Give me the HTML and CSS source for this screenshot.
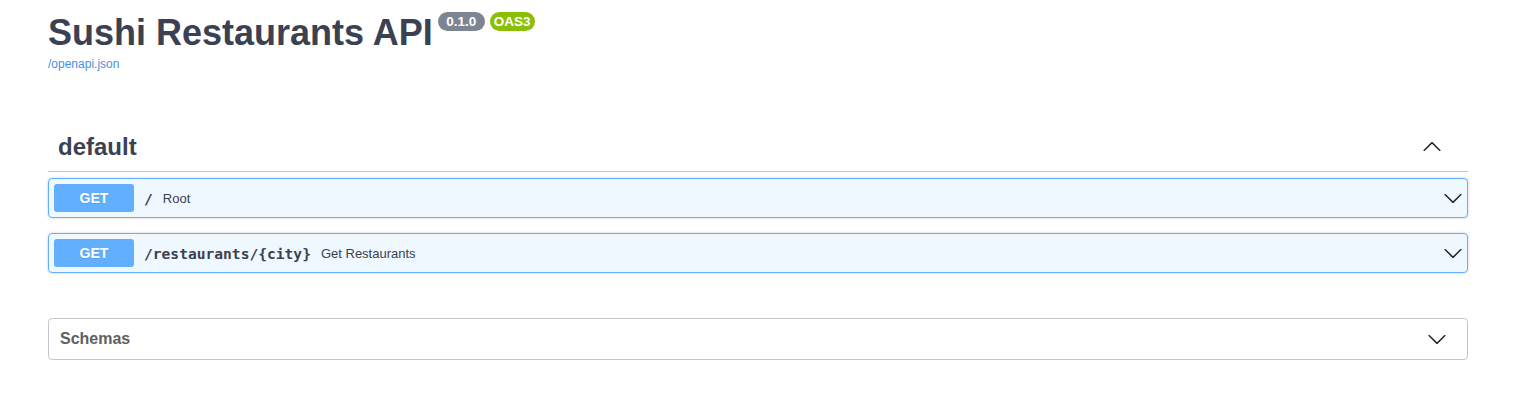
FILE: index.html
```html
<!DOCTYPE html>
<html>
<head>
<meta charset="utf-8">
<title>Sushi Restaurants API</title>
<link rel="stylesheet" href="styles.css">
</head>
<body>
<div class="wrapper">
  <div class="info">
    <h2 class="title">Sushi Restaurants API<span class="badge badge-version">0.1.0</span><span class="badge badge-oas">OAS3</span></h2>
    <a class="spec-link" href="#">/openapi.json</a>
  </div>

  <section class="tag-section">
    <h3 class="tag">
      <span class="tag-name">default</span>
      <span class="tag-toggle">
        <svg width="20" height="20" viewBox="0 0 20 20"><path d="M17.418 14.891c.272.268.709.268.979 0s.271-.701 0-.969l-7.908-7.83c-.27-.268-.707-.268-.979 0l-7.908 7.830c-.27.268-.27.701 0 .969.271.268.709.268.979 0L10 7.75l7.418 7.141z" fill="#222"/></svg>
      </span>
    </h3>

    <div class="opblock">
      <div class="summary">
        <span class="method">GET</span>
        <span class="path">/</span>
        <span class="desc">Root</span>
        <svg class="arrow" width="20" height="20" viewBox="0 0 20 20"><path d="M17.418 6.109c.272-.268.709-.268.979 0s.271.701 0 .969l-7.908 7.83c-.27.268-.707.268-.979 0l-7.908-7.830c-.27-.268-.27-.701 0-.969.271-.268.709-.268.979 0L10 13.25l7.418-7.141z" fill="#222"/></svg>
      </div>
    </div>

    <div class="opblock">
      <div class="summary">
        <span class="method">GET</span>
        <span class="path">/restaurants/{city}</span>
        <span class="desc">Get Restaurants</span>
        <svg class="arrow" width="20" height="20" viewBox="0 0 20 20"><path d="M17.418 6.109c.272-.268.709-.268.979 0s.271.701 0 .969l-7.908 7.83c-.27.268-.707.268-.979 0l-7.908-7.830c-.27-.268-.27-.701 0-.969.271-.268.709-.268.979 0L10 13.25l7.418-7.141z" fill="#222"/></svg>
      </div>
    </div>
  </section>

  <section class="models">
    <h4 class="models-title">
      <span>Schemas</span>
      <svg width="20" height="20" viewBox="0 0 20 20"><path d="M17.418 6.109c.272-.268.709-.268.979 0s.271.701 0 .969l-7.908 7.83c-.27.268-.707.268-.979 0l-7.908-7.830c-.27-.268-.27-.701 0-.969.271-.268.709-.268.979 0L10 13.25l7.418-7.141z" fill="#222"/></svg>
    </h4>
  </section>
</div>
</body>
</html>
```

FILE: styles.css
```css
html, body {
  margin: 0;
  padding: 0;
  background: #fff;
}

body {
  font-family: "Liberation Sans", Arial, sans-serif;
  color: #3b4151;
}

.wrapper {
  margin-left: 48px;
  width: 1420px;
}

.info {
  padding-top: 13px;
  display: flex;
  flex-direction: column;
  align-items: flex-start;
}

.title {
  margin: 0;
  font-size: 36px;
  line-height: 40px;
  font-weight: 700;
  color: #3b4151;
  display: flex;
  align-items: flex-start;
}

.badge {
  display: inline-block;
  margin-top: -1px;
  margin-left: 5px;
  height: 19px;
  line-height: 19px;
  font-size: 13.5px;
  font-weight: 700;
  color: #fff;
  border-radius: 57px;
  box-sizing: border-box;
}

.badge-version {
  margin-left: 5px;
  background: #7d8492;
  padding: 0 8.5px;
}

.badge-oas {
  background: #89bf04;
  padding: 0 4px;
}

.spec-link {
  margin-top: 4px;
  font-size: 12px;
  line-height: 14px;
  color: #4990e2;
  text-decoration: none;
}

.tag-section {
  margin-top: 52px;
}

.tag {
  margin: 0;
  display: flex;
  align-items: center;
  justify-content: space-between;
  padding: 10px 20px 10px 10px;
  font-size: 24px;
  line-height: 28px;
  font-weight: 700;
  color: #3b4151;
  border-bottom: 1px solid rgba(59, 65, 81, 0.3);
}

.tag-toggle {
  display: flex;
  margin-right: 6px;
  margin-top: -3px;
}

.opblock {
  margin: 6px 0 15px;
  border: 1px solid #61affe;
  background: rgba(97, 175, 254, 0.1);
  border-radius: 4px;
  box-shadow: 0 0 3px rgba(0, 0, 0, 0.19);
}

.opblock + .opblock {
  margin-top: 0;
}

.summary {
  display: flex;
  align-items: center;
  padding: 5px;
}

.method {
  min-width: 80px;
  padding: 6px 0;
  line-height: 16px;
  font-size: 14px;
  font-weight: 700;
  text-align: center;
  color: #fff;
  background: #61affe;
  border-radius: 3px;
  text-shadow: 0 1px 0 rgba(0, 0, 0, 0.1);
}

.path {
  padding: 0 10px;
  font-family: "DejaVu Sans Mono", "Liberation Mono", monospace;
  font-size: 14.6px;
  font-weight: 700;
  color: #3b4151;
}

.desc {
  flex: 1;
  font-size: 13px;
  color: #3b4151;
}

.arrow {
  margin-right: -1px;
}

.models {
  margin-top: 45px;
  border: 1px solid rgba(59, 65, 81, 0.3);
  border-radius: 4px;
}

.models-title {
  margin: 0;
  display: flex;
  align-items: center;
  justify-content: space-between;
  padding: 10px 20px 10px 11px;
  font-size: 16px;
  line-height: 20px;
  font-weight: 700;
  color: #606060;
}
```
